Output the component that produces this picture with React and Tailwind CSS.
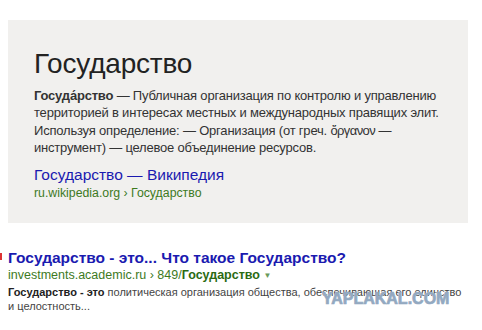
export default function App() {
  return (
    <div className="relative w-[482px] h-[330px] bg-white overflow-hidden" style={{ fontFamily: '"Liberation Sans", Arial, sans-serif' }}>
      <div className="pt-[20px] pl-[8px]">
        <div className="w-[460px] h-[203px] bg-[#f1f0ee] pl-[26px] pt-[28px]">
          <h1 className="text-[28px] leading-[32px] text-[#222] tracking-[-0.2px]">Государство</h1>
          <p className="mt-[7px] text-[13px] leading-[17.3px] text-[#333] tracking-[-0.2px] w-[420px]">
            <b>Госуда́рство</b> — Публичная организация по контролю и управлению территорией в интересах местных и международных правящих элит. Используя определение: — Организация (от греч. <span className="tracking-[-0.6px]">ὄργανον</span> — инструмент) — целевое объединение ресурсов.
          </p>
          <div className="mt-[9px] text-[15.5px] leading-[19px] text-[#1a1ab0]">Государство — Википедия</div>
          <div className="text-[12.3px] leading-[15px] text-[#3d7a1e] mt-[2px]">ru.wikipedia.org › Государство</div>
        </div>
      </div>
      <div className="relative mt-[26px] pl-[8px]">
        <div className="absolute left-0 top-[4px] w-[2px] h-[7px] bg-[#d33]" />
        <div className="text-[15.5px] leading-[18px] font-bold text-[#1a1ab0]">Государство - это... Что такое Государство?</div>
        <div className="text-[12.5px] leading-[16px] text-[#3d7a1e]">investments.academic.ru › 849/<b className="text-[#2a6a12]">Государство</b> <span className="text-[8px] align-middle text-[#6a9a5a]">▼</span></div>
        <div className="text-[11px] leading-[14px] text-[#444] mt-[1px] w-[462px]"><b className="text-[#222]">Государство - это</b> политическая организация общества, обеспечивающая его единство и целостность...</div>
      </div>
      <div className="absolute left-[322px] top-[291px] text-[16px] leading-[16px] font-bold text-[#93a9c1] [-webkit-text-stroke:0.7px_#93a9c1] [text-shadow:0_0_1px_#fff]">YAPLAKAL.COM</div>
    </div>
  );
}
